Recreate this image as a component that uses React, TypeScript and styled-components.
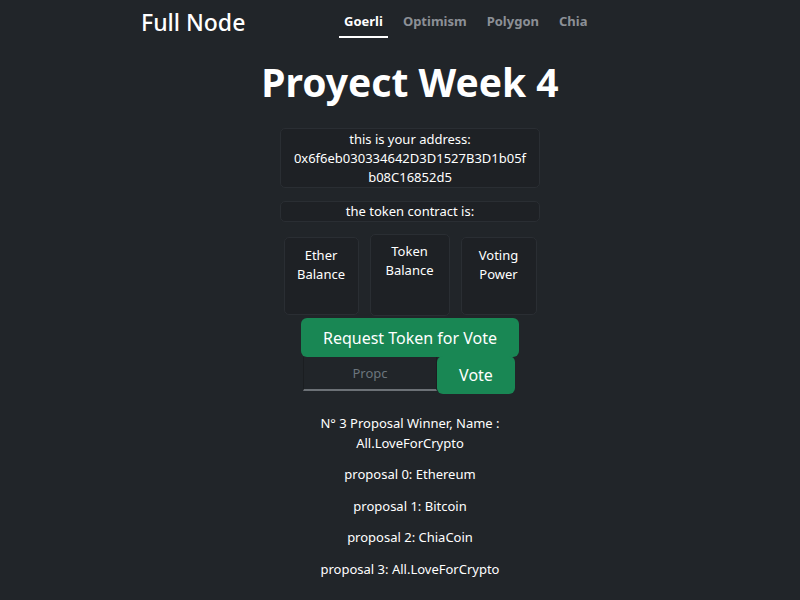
import React from "react";
import styled, { createGlobalStyle } from "styled-components";

const Global = createGlobalStyle`
  html, body { margin: 0; padding: 0; background: #212529; }
  body { font-family: "Noto Sans", "Open Sans", sans-serif; color: #fff; }
  * { box-sizing: border-box; }
`;

const Page = styled.div`
  width: 800px;
  height: 600px;
  background: #212529;
  overflow: hidden;
  display: flex;
  flex-direction: column;
`;

const NavBar = styled.nav`
  width: 800px;
  height: 44px;
  display: flex;
  align-items: center;
  padding-left: 141px;
`;

const Brand = styled.div`
  font-size: 23px;
  font-weight: 500;
  width: 198px;
  margin-top: -1px;
`;

const NavLinks = styled.div`
  display: flex;
  gap: 10px;
  height: 44px;
`;

const NavLink = styled.a<{ $active?: boolean }>`
  font-size: 13px;
  font-weight: 700;
  color: ${(p) => (p.$active ? "#fff" : "#8c9096")};
  padding: 12px 5px 0;
  height: 38px;
  border-bottom: 2px solid ${(p) => (p.$active ? "#fff" : "transparent")};
  text-decoration: none;
  line-height: 18px;
`;

const Main = styled.main`
  display: flex;
  flex-direction: column;
  align-items: center;
  padding-left: 20px;
`;

const Title = styled.h1`
  font-size: 39px;
  font-weight: 700;
  margin: 13px 0 0;
  line-height: 50px;
`;

const InfoBox = styled.div<{ $mt: number }>`
  width: 260px;
  background: #1e2125;
  border: 1px solid #2a2e33;
  border-radius: 5px;
  text-align: center;
  font-size: 13px;
  line-height: 19px;
  padding: 0 8px;
  margin-top: ${(p) => p.$mt}px;
`;

const AddressBox = styled(InfoBox)`
  padding-top: 1px;
  padding-bottom: 0;
`;

const Address = styled.span`
  word-break: break-all;
  display: block;
  padding: 0 4px;
`;

const Stats = styled.div`
  display: flex;
  align-items: flex-start;
  gap: 11px;
  margin-top: 12px;
`;

const StatCard = styled.div<{ $w: number; $h: number; $pt: number; $mt: number }>`
  width: ${(p) => p.$w}px;
  height: ${(p) => p.$h}px;
  margin-top: ${(p) => p.$mt}px;
  padding-top: ${(p) => p.$pt}px;
  background: #1e2125;
  border: 1px solid #2a2e33;
  border-radius: 5px;
  text-align: center;
  font-size: 13px;
  line-height: 19px;
`;

const GreenButton = styled.button<{ $w: number; $h: number }>`
  width: ${(p) => p.$w}px;
  height: ${(p) => p.$h}px;
  background: #198754;
  color: #fff;
  border: none;
  border-radius: 6px;
  font-family: inherit;
  font-size: 16px;
  padding: 0;
`;

const RequestButton = styled(GreenButton)`
  margin-top: 2px;
`;

const VoteRow = styled.div`
  display: flex;
  align-items: flex-start;
  margin-left: -2px;
`;

const Input = styled.input`
  width: 134px;
  height: 34px;
  background: #212529;
  border: 1px solid #1b1e21;
  border-bottom: 2px solid #6c7176;
  border-top: none;
  color: #fff;
  text-align: center;
  font-family: inherit;
  font-size: 13px;
  outline: none;
  &::placeholder { color: #6c757d; }
`;

const VoteButton = styled(GreenButton)`
  margin-top: -1px;
`;

const Results = styled.div`
  margin-top: 19px;
  width: 200px;
  text-align: center;
  font-size: 13px;
  line-height: 20px;
  display: flex;
  flex-direction: column;
  gap: 11.4px;
`;

const Line = styled.p`
  margin: 0;
`;

export default function App() {
  return (
    <Page>
      <Global />
      <NavBar>
        <Brand>Full Node</Brand>
        <NavLinks>
          <NavLink $active>Goerli</NavLink>
          <NavLink>Optimism</NavLink>
          <NavLink>Polygon</NavLink>
          <NavLink>Chia</NavLink>
        </NavLinks>
      </NavBar>
      <Main>
        <Title>Proyect Week 4</Title>
        <AddressBox $mt={21}>
          this is your address:
          <Address>0x6f6eb030334642D3D1527B3D1b05fb08C16852d5</Address>
        </AddressBox>
        <InfoBox $mt={13}>the token contract is:</InfoBox>
        <Stats>
          <StatCard $w={75} $h={78} $pt={8} $mt={3}>Ether<br />Balance</StatCard>
          <StatCard $w={80} $h={82} $pt={7} $mt={0}>Token<br />Balance</StatCard>
          <StatCard $w={76} $h={78} $pt={8} $mt={3}>Voting<br />Power</StatCard>
        </Stats>
        <RequestButton $w={218} $h={39}>Request Token for Vote</RequestButton>
        <VoteRow>
          <Input placeholder="Propc" />
          <VoteButton $w={78} $h={38}>Vote</VoteButton>
        </VoteRow>
        <Results>
          <Line>N° 3 Proposal Winner, Name : All.LoveForCrypto</Line>
          <Line>proposal 0: Ethereum</Line>
          <Line>proposal 1: Bitcoin</Line>
          <Line>proposal 2: ChiaCoin</Line>
          <Line>proposal 3: All.LoveForCrypto</Line>
        </Results>
      </Main>
    </Page>
  );
}
